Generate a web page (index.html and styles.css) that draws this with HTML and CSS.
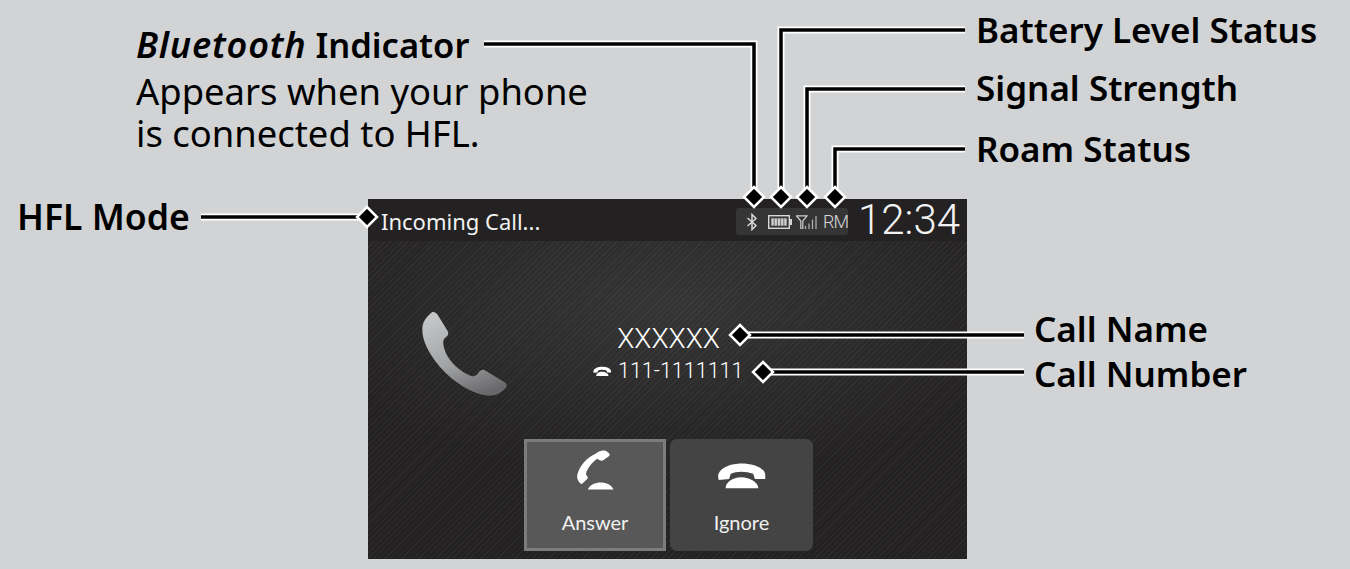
FILE: index.html
```html
<!DOCTYPE html>
<html>
  <head>
    <meta name="viewport" content="width=device-width, initial-scale=1" />
    <link rel="stylesheet" href="styles.css">
  </head>
  <body>
    <div class="stage">
      <div class="screen">
        <div class="topbar">
          <span class="mode">Incoming Call...</span>
          <div class="status">
            <svg class="ico-bt" viewBox="0 0 12 18">
              <path d="M1.5 5 L10 12.5 L6 16.5 V1.5 L10 5.5 L1.5 13" fill="none" stroke="#d8d8d8" stroke-width="1.5" />
            </svg>
            <svg class="ico-batt" viewBox="0 0 24 14">
              <rect x="0.7" y="0.7" width="20.6" height="12.6" fill="none" stroke="#d8d8d8" stroke-width="1.4" />
              <rect x="21.8" y="4" width="2.2" height="6" fill="#d8d8d8" />
              <path d="M3 3 H19 V11 H3 Z M6.2 3 V11 M9.4 3 V11 M12.6 3 V11 M15.8 3 V11" fill="#cfcfcf" stroke="#444" stroke-width="0.7" />
            </svg>
            <svg class="ico-signal" viewBox="0 0 22 14">
              <path d="M0.5 0.8 H11 L6.8 6 V14 H4.8 V6 Z" fill="none" stroke="#cfcfcf" stroke-width="1.2" />
              <path d="M9.5 11 V14 M13 8.5 V14 M16.5 4.5 V14 M20 1 V14" stroke="#b5b5b5" stroke-width="1.2" />
            </svg>
            <span class="roam">RM</span>
          </div>
          <span class="clock">12:34</span>
        </div>
        <div class="call">
          <div class="call-main">
            <svg class="handset" viewBox="0 0 330 300">
              <defs>
                <linearGradient id="metal" x1="0.3" y1="0" x2="0.7" y2="1">
                  <stop offset="0" stop-color="#c4c5c7" />
                  <stop offset="0.55" stop-color="#a2a3a5" />
                  <stop offset="1" stop-color="#68686a" />
                </linearGradient>
              </defs>
              <path d="M62 25 C68 18 76 20 82 28 L113 78 C118 88 112 94 104 100 C98 106 98 118 106 140 C118 170 150 200 182 212 C194 216 200 212 206 202 C212 194 220 192 228 198 L284 232 C292 238 292 246 284 252 C268 268 246 276 222 270 C170 260 110 216 74 166 C50 132 36 100 37 72 C37 52 48 38 62 25 Z" fill="url(#metal)" />
            </svg>
            <div class="caller">
              <div class="caller-name">XXXXXX</div>
              <div class="caller-num">
                <svg class="ico-small" viewBox="20 15 150 85">
                  <path d="M28 58 C30 30 70 20 95 20 C125 20 165 30 165 55 L165 65 L135 65 L130 50 C110 42 80 42 65 50 L60 65 L30 68 Z M50 92 C50 75 70 60 95 60 C120 60 145 75 145 92 Z" fill="#fff" />
                </svg>
                <span>111-1111111</span>
              </div>
            </div>
          </div>
          <div class="actions">
            <div class="btn btn-active">
              <svg class="ico-answer" viewBox="35 8 135 140">
                <path d="M105 25 C118 14 132 14 140 20 C148 25 150 31 145 34 L126 48 C118 50 112 44 108 42 C96 50 84 64 80 72 C76 80 72 88 72 92 C76 96 80 102 77 106 L60 122 C54 124 46 112 44 102 C44 82 60 56 80 40 C88 34 96 30 105 25 Z M78 140 C90 110 148 110 160 140 Z" fill="#fff" />
              </svg>
              <span>Answer</span>
            </div>
            <div class="btn">
              <svg class="ico-ignore" viewBox="20 10 155 90">
                <path d="M28 58 C30 30 70 20 95 20 C125 20 165 30 165 55 L165 65 L135 65 L130 50 C110 42 80 42 65 50 L60 65 L30 68 Z M50 92 C50 75 70 60 95 60 C120 60 145 75 145 92 Z" fill="#fff" />
              </svg>
              <span>Ignore</span>
            </div>
          </div>
        </div>
      </div>

      <svg class="leaders" viewBox="0 0 1350 569">
        <g class="leader-edge">
          <path d="M484 44 H754 V197" />
          <path d="M965 30 H781 V197" />
          <path d="M965 89 H807 V197" />
          <path d="M965 149 H835 V197" />
          <path d="M201 217 H367" />
          <path d="M1024 335 H740" />
          <path d="M1024 372 H763" />
        </g>
        <g class="leader-core">
          <path d="M484 44 H754 V197" />
          <path d="M965 30 H781 V197" />
          <path d="M965 89 H807 V197" />
          <path d="M965 149 H835 V197" />
          <path d="M201 217 H367" />
          <path d="M1024 335 H740" />
          <path d="M1024 372 H763" />
        </g>
        <g class="leader-dot">
          <path d="M754 187 L764 197 L754 207 L744 197 Z" />
          <path d="M781 187 L791 197 L781 207 L771 197 Z" />
          <path d="M807 187 L817 197 L807 207 L797 197 Z" />
          <path d="M835 187 L845 197 L835 207 L825 197 Z" />
          <path d="M367 207 L377 217 L367 227 L357 217 Z" />
          <path d="M740 325 L750 335 L740 345 L730 335 Z" />
          <path d="M763 362 L773 372 L763 382 L753 372 Z" />
        </g>
      </svg>

      <div class="note note-bt">
        <b class="bt-title"><i>Bluetooth</i> Indicator</b>
        <p>Appears when your phone<br>is connected to HFL.</p>
      </div>
      <b class="note note-batt">Battery Level Status</b>
      <b class="note note-signal">Signal Strength</b>
      <b class="note note-roam">Roam Status</b>
      <b class="note note-hfl">HFL Mode</b>
      <b class="note note-name">Call Name</b>
      <b class="note note-num">Call Number</b>
    </div>
  </body>
</html>
```

FILE: styles.css
```css
html,
body {
  margin: 0;
  background-color: #d1d3d4;
}

.stage {
  position: relative;
  width: 1350px;
  height: 569px;
  overflow: hidden;
  padding: 199px 0 0 368px;
  box-sizing: border-box;
  font-family: "Noto Sans", "Open Sans", sans-serif;
}

/* head unit */
.screen {
  width: 599px;
  height: 360px;
  display: flex;
  flex-direction: column;
  background-color: #232122;
  color: #fff;
}

.topbar {
  height: 42px;
  flex: none;
  display: flex;
  align-items: center;
  padding: 0 7px 0 13px;
  background-color: #232122;
}

.mode {
  flex: 1;
  font-size: 22px;
  padding-top: 2px;
  color: #f1f1f1;
}

.status {
  width: 112px;
  height: 27px;
  margin: 3px 10px 0 0;
  display: flex;
  align-items: center;
  box-sizing: border-box;
  padding-left: 10px;
  border-radius: 3px;
  background-color: #363536;
}

.ico-bt {
  width: 12px;
  height: 18px;
}

.ico-batt {
  width: 24px;
  height: 14px;
  margin-left: 10px;
}

.ico-signal {
  width: 22px;
  height: 14px;
  margin-left: 4px;
}

.roam {
  margin-left: 5px;
  font-family: Roboto, sans-serif;
  font-weight: 300;
  font-size: 18px;
  letter-spacing: -1px;
  color: #d8d8d8;
}

.clock {
  font-family: Roboto, sans-serif;
  font-weight: 300;
  font-size: 42px;
  line-height: 42px;
  color: #f2f2f2;
}

.call {
  flex: 1;
  display: flex;
  flex-direction: column;
  background:
    repeating-linear-gradient(135deg, rgba(255, 255, 255, 0.045) 0 1px, transparent 1px 4px),
    radial-gradient(ellipse 70% 60% at 50% 20%, #363536, #232122 90%);
}

.call-main {
  height: 198px;
  flex: none;
  display: flex;
}

.handset {
  width: 110px;
  height: 100px;
  margin: 64px 0 0 42px;
}

.caller {
  margin: 79px 0 0 72px;
  width: 153px;
  display: flex;
  flex-direction: column;
}

.caller-name {
  align-self: flex-end;
  margin: 1px 25px -1px 0;
  font-family: Roboto, sans-serif;
  font-weight: 300;
  font-size: 28px;
  line-height: 36px;
}

.caller-num {
  display: flex;
  align-items: center;
  gap: 6px;
  white-space: nowrap;
  font-family: Roboto, sans-serif;
  font-weight: 300;
  font-size: 21.5px;
  line-height: 28px;
  margin-top: 1px;
}

.ico-small {
  flex: none;
  width: 20px;
  height: 11px;
}

.actions {
  display: flex;
  gap: 4px;
  padding-left: 156px;
}

.btn {
  width: 143px;
  height: 112px;
  box-sizing: border-box;
  display: flex;
  flex-direction: column;
  align-items: center;
  padding-top: 21px;
  border-radius: 7px;
  background-color: #444445;
  font-family: Lato, sans-serif;
  font-size: 20px;
  line-height: 24px;
  color: #f0f0f0;
}

.ico-ignore {
  width: 54px;
  height: 31px;
  margin-bottom: 19px;
}

.ico-answer {
  width: 43px;
  height: 44px;
  margin-bottom: 18px;
}

.btn-active {
  width: 142px;
  border: 3px solid #7c7c7c;
  border-radius: 0;
  background-color: #585859;
  padding-top: 6px;
}

/* callouts */
.leaders {
  position: absolute;
  left: 0;
  top: 0;
  width: 1350px;
  height: 569px;
}

.leaders path {
  fill: none;
}

.leader-edge path {
  stroke: #fff;
  stroke-width: 7;
}

.leader-core path {
  stroke: #000;
  stroke-width: 3.5;
}

.leaders .leader-dot path {
  fill: #000;
  stroke: #fff;
  stroke-width: 2.5;
}

.note {
  position: absolute;
  color: #000;
  font-size: 35px;
  line-height: 44px;
  font-weight: 600;
  white-space: nowrap;
}

.note p {
  margin: 3px 0 0;
  font-size: 36.4px;
  font-weight: 400;
  line-height: 42px;
}

.bt-title {
  font-size: 34.5px;
  font-weight: 600;
}

.bt-title i {
  font-size: 36px;
  letter-spacing: 0.8px;
}

.note-bt {
  left: 136px;
  top: 23px;
}

.note-batt {
  left: 976px;
  top: 8px;
}

.note-signal {
  left: 976px;
  top: 66px;
}

.note-roam {
  left: 976px;
  top: 127px;
}

.note-hfl {
  left: 17px;
  top: 194px;
  font-size: 35.6px;
}

.note-name {
  left: 1034px;
  top: 307px;
}

.note-num {
  left: 1034px;
  top: 352px;
}
```
